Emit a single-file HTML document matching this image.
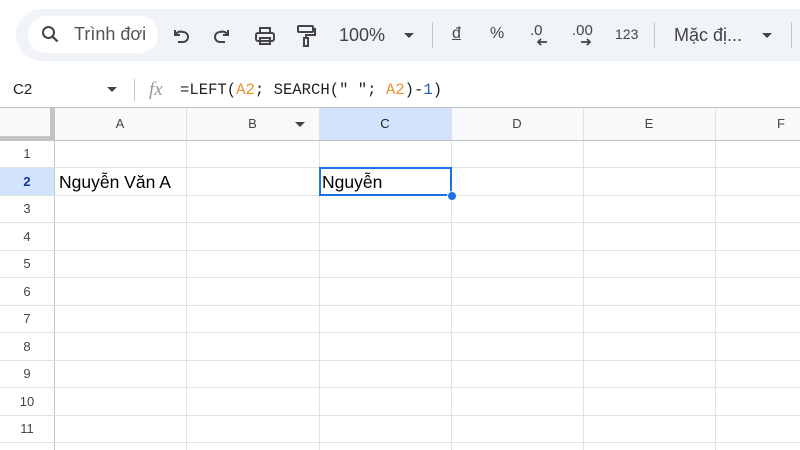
<!DOCTYPE html>
<html><head><meta charset="utf-8"><style>
*{margin:0;padding:0;box-sizing:border-box}
body{width:800px;height:450px;overflow:hidden;background:#fff;font-family:"Liberation Sans",Arial,sans-serif;color:#444;position:relative}
.a{position:absolute}
.tb{left:16px;top:9px;width:800px;height:52px;background:#f0f4f9;border-radius:26px 0 0 26px}
.pill{left:28px;top:16px;width:130px;height:37px;background:#fff;border-radius:19px}
.t{font-size:18px;color:#444;white-space:nowrap}
.sep{width:1px;height:26px;background:#c7c7c7;top:22px}
.vl{position:absolute;top:108px;bottom:0;width:1px;background:#e1e1e1}
.hl{position:absolute;left:0;right:0;height:1px;background:#e1e1e1}
.col{position:absolute;top:108px;height:32px;font-size:13px;line-height:32px;text-align:center;color:#444}
.rn{position:absolute;left:0;width:54px;font-size:13px;text-align:center;color:#444}
.cell{position:absolute;font-size:17.5px;color:#000}
</style></head><body>
<div class="a tb"></div>
<div class="a pill"></div>
<svg class="a" style="left:40px;top:24px" width="22" height="22" viewBox="0 0 22 22"><circle cx="8.5" cy="8.5" r="5.5" fill="none" stroke="#444" stroke-width="2"/><path d="M12.5 12.5l5 5" stroke="#444" stroke-width="2.2"/></svg>
<div class="a t" style="left:74px;top:24px;color:#555">Trình đơi</div>
<svg class="a" style="left:170px;top:25px" width="22" height="22" viewBox="0 0 22 22" fill="none" stroke="#444" stroke-width="2"><path d="M5 5v5h5"/><path d="M5 10c2-3 5-4 8-3a5 5 0 0 1 0 10H8"/></svg>
<svg class="a" style="left:211px;top:25px" width="22" height="22" viewBox="0 0 22 22" fill="none" stroke="#444" stroke-width="2"><path d="M17 5v5h-5"/><path d="M17 10c-2-3-5-4-8-3a5 5 0 0 0 0 10h5"/></svg>
<svg class="a" style="left:253px;top:25px" width="24" height="22" viewBox="0 0 24 22" fill="none" stroke="#444" stroke-width="2"><rect x="3" y="8" width="18" height="8" rx="2"/><path d="M7 8V3h10v5M7 13h10v6H7z"/></svg>
<svg class="a" style="left:295px;top:24px" width="22" height="24" viewBox="0 0 22 24" fill="none" stroke="#444" stroke-width="2"><rect x="3" y="2" width="15" height="6" rx="1"/><path d="M18 5h2v6h-9v3"/><rect x="9" y="14" width="4" height="8"/></svg>
<div class="a t" style="left:339px;top:25px">100%</div>
<svg class="a" style="left:403px;top:32px" width="12" height="8"><path d="M1 1h10L6 6z" fill="#444"/></svg>
<div class="a sep" style="left:432px"></div>
<div class="a t" style="left:452px;top:25px;font-size:16px;text-decoration:underline">đ</div>
<div class="a t" style="left:490px;top:25px;font-size:16px">%</div>
<div class="a t" style="left:530px;top:22px;font-size:15px">.0</div>
<svg class="a" style="left:536px;top:38px" width="12" height="8" viewBox="0 0 12 8" fill="none" stroke="#444" stroke-width="1.8"><path d="M11 4H2M5 1L2 4l3 3"/></svg>
<div class="a t" style="left:572px;top:22px;font-size:15px">.00</div>
<svg class="a" style="left:580px;top:38px" width="12" height="8" viewBox="0 0 12 8" fill="none" stroke="#444" stroke-width="1.8"><path d="M1 4h9M7 1l3 3-3 3"/></svg>
<div class="a t" style="left:615px;top:26px;font-size:14px">123</div>
<div class="a sep" style="left:654px"></div>
<div class="a t" style="left:674px;top:25px">Mặc đị...</div>
<svg class="a" style="left:761px;top:32px" width="12" height="8"><path d="M1 1h10L6 6z" fill="#444"/></svg>
<div class="a sep" style="left:791px"></div>
<!-- formula bar -->
<div class="a" style="left:13px;top:81px;font-size:15px;color:#222">C2</div>
<svg class="a" style="left:106px;top:86px" width="12" height="8"><path d="M1 1h10L6 6z" fill="#444"/></svg>
<div class="a" style="left:134px;top:79px;width:1px;height:22px;background:#c7c7c7"></div>
<div class="a" style="left:149px;top:79px;font-family:'Liberation Serif',serif;font-style:italic;font-size:19px;color:#999">fx</div>
<div class="a" style="left:180px;top:81px;font-family:'Liberation Mono',monospace;font-size:15.6px;color:#222;white-space:pre">=LEFT(<span style="color:#e8912d">A2</span>; SEARCH(" "; <span style="color:#e8912d">A2</span>)-<span style="color:#1a5bc4">1</span>)</div>
<!-- grid -->
<div class="a" style="left:0;top:107px;width:800px;height:1px;background:#c4c4c4"></div>
<div class="a" style="left:0;top:108px;width:800px;height:32px;background:#f8f9fa"></div>
<div class="a" style="left:319px;top:108px;width:132px;height:32px;background:#d3e3fd"></div>
<div class="a" style="left:0;top:167px;width:54px;height:28px;background:#d3e3fd"></div>
<div class="a" style="left:0;top:136px;width:54px;height:4px;background:#c4c4c4"></div>
<div class="a" style="left:50px;top:108px;width:4px;height:32px;background:#c4c4c4"></div>
<div class="vl" style="left:54px;background:#c4c4c4"></div>
<div class="vl" style="left:186px"></div><div class="vl" style="left:319px"></div><div class="vl" style="left:451px"></div><div class="vl" style="left:583px"></div><div class="vl" style="left:715px"></div>
<div class="hl" style="top:140px;background:#c4c4c4"></div>
<div class="col" style="left:54px;width:132px">A</div>
<div class="col" style="left:186px;width:133px">B</div>
<svg class="a" style="left:294px;top:121px" width="12" height="8"><path d="M1 1h10L6 6z" fill="#444"/></svg>
<div class="col" style="left:319px;width:132px;color:#222">C</div>
<div class="col" style="left:451px;width:132px">D</div>
<div class="col" style="left:583px;width:132px">E</div>
<div class="col" style="left:715px;width:132px">F</div>
<div class="hl" style="top:167px"></div><div class="hl" style="top:195px"></div><div class="hl" style="top:222px"></div><div class="hl" style="top:250px"></div><div class="hl" style="top:277px"></div><div class="hl" style="top:305px"></div><div class="hl" style="top:332px"></div><div class="hl" style="top:360px"></div><div class="hl" style="top:387px"></div><div class="hl" style="top:415px"></div><div class="hl" style="top:442px"></div>
<div class="rn" style="top:146px">1</div>
<div class="rn" style="top:174px;color:#0b3d91;font-weight:bold">2</div>
<div class="rn" style="top:201px">3</div>
<div class="rn" style="top:229px">4</div>
<div class="rn" style="top:256px">5</div>
<div class="rn" style="top:284px">6</div>
<div class="rn" style="top:311px">7</div>
<div class="rn" style="top:339px">8</div>
<div class="rn" style="top:366px">9</div>
<div class="rn" style="top:394px">10</div>
<div class="rn" style="top:421px">11</div>
<div class="cell" style="left:59px;top:172px">Nguyễn Văn A</div>
<div class="a" style="left:319px;top:167px;width:133px;height:29px;border:2px solid #1a73e8"></div>
<div class="cell" style="left:322px;top:172px">Nguyễn</div>
<div class="a" style="left:447px;top:191px;width:10px;height:10px;border-radius:50%;background:#1a73e8;border:1px solid #fff"></div>
</body></html>
